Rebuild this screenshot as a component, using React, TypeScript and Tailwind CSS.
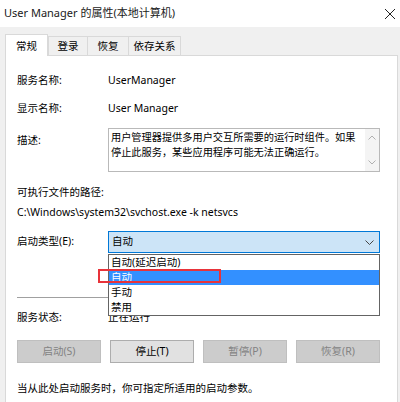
import React from 'react';

// Service properties dialog (Windows style) with open startup-type dropdown

const font = { fontFamily: '"Noto Sans", "Noto Sans CJK SC", sans-serif' };

function Tab({ label, w, active }: { label: string; w: string; active?: boolean }) {
  if (active) {
    return (
      <div className={`relative z-10 -mb-px h-[22px] border border-b-0 border-[#d9d9d9] bg-white pt-[1px] text-center text-[10.5px] leading-[20px] ${w}`}>
        {label}
      </div>
    );
  }
  return (
    <div className={`-ml-px h-[19px] border border-b-0 border-[#d9d9d9] bg-[#f0f0f0] text-center text-[10.5px] leading-[18px] first:ml-0 ${w}`}>
      {label}
    </div>
  );
}

function Btn({ label, disabled }: { label: string; disabled?: boolean }) {
  return (
    <div
      className={
        disabled
          ? 'flex h-[23px] items-center justify-center border border-[#bfbfbf] bg-[#cccccc] text-[10.5px] text-[#838383]'
          : 'flex h-[23px] items-center justify-center border border-[#adadad] bg-[#e1e1e1] text-[10.5px] text-black'
      }
    >
      {label}
    </div>
  );
}

export default function App() {
  return (
    <div className="relative h-[402px] w-[400px] overflow-hidden bg-[#f0f0f0] text-black" style={font}>
      {/* Title bar */}
      <div className="flex h-[27px] items-center justify-between bg-white pl-[4px] pr-[3px]">
        <span className="text-[11px] text-[#1a1a1a]">User Manager 的属性(本地计算机)</span>
        <svg width="12" height="12" viewBox="0 0 12 12" className="mr-[1px]">
          <path d="M1 1 L11 11 M11 1 L1 11" stroke="#222" strokeWidth="1" />
        </svg>
      </div>

      {/* Tabs */}
      <div className="flex items-end pl-[5px] pt-[7px]">
        <Tab label="常规" w="w-[43px]" active />
        <div className="flex items-end">
          <Tab label="登录" w="w-[40px]" />
          <Tab label="恢复" w="w-[42px]" />
          <Tab label="依存关系" w="w-[53px]" />
        </div>
      </div>

      {/* Panel */}
      <div className="ml-[5px] mr-[2px] h-[360px] border border-[#d9d9d9] bg-white pl-[11px] pr-[17px] text-[10.5px]">
        <div className="mt-[15px] flex h-[20px] items-center">
          <span className="w-[91px]">服务名称:</span>
          <span>UserManager</span>
        </div>
        <div className="mt-[8px] flex h-[20px] items-center">
          <span className="w-[91px]">显示名称:</span>
          <span>User Manager</span>
        </div>
        <div className="mt-[9px] flex">
          <span className="w-[91px] pt-[5px]">描述:</span>
          <div className="flex h-[44px] flex-1 border border-[#b9b9b9]">
            <div className="flex-1 pl-[2px] pt-[1px] text-[10.2px] leading-[15px]">
              用户管理器提供多用户交互所需要的运行时组件。如果停止此服务，某些应用程序可能无法正确运行。
            </div>
            <div className="flex w-[14px] flex-col items-center justify-between bg-[#f4f4f4] py-[6px]">
              <svg width="8" height="5" viewBox="0 0 8 5">
                <path d="M0.5 4.5 L4 1 L7.5 4.5" fill="none" stroke="#b0b0b0" strokeWidth="1" />
              </svg>
              <svg width="8" height="5" viewBox="0 0 8 5">
                <path d="M0.5 0.5 L4 4 L7.5 0.5" fill="none" stroke="#b0b0b0" strokeWidth="1" />
              </svg>
            </div>
          </div>
        </div>
        <div className="mt-[10px] h-[20px] leading-[20px]">可执行文件的路径:</div>
        <div className="h-[20px] leading-[20px]">C:\Windows\system32\svchost.exe -k netsvcs</div>
        <div className="mt-[9px] flex items-center">
          <span className="w-[91px]">启动类型(E):</span>
          <div className="flex h-[22px] flex-1 items-center justify-between border border-[#0078d7] bg-[#cce4f7] pl-[3px] pr-[5px]">
            <span>自动</span>
            <svg width="9" height="5" viewBox="0 0 9 5">
              <path d="M0.5 0.5 L4.5 4.5 L8.5 0.5" fill="none" stroke="#444" strokeWidth="1" />
            </svg>
          </div>
        </div>
        <div className="mt-[44px] h-px bg-[#a0a0a0]" />
        <div className="mt-[10px] flex h-[20px] items-center">
          <span className="w-[91px]">服务状态:</span>
          <span>正在运行</span>
        </div>
        <div className="mt-[12px] grid grid-cols-4 gap-[9px]">
          <Btn label="启动(S)" disabled />
          <Btn label="停止(T)" />
          <Btn label="暂停(P)" disabled />
          <Btn label="恢复(R)" disabled />
        </div>
        <div className="mt-[15px] h-[20px] leading-[20px]">当从此处启动服务时，你可指定所适用的启动参数。</div>
      </div>

      {/* Open dropdown list */}
      <div className="absolute left-[108px] top-[254px] flex w-[272px] flex-col border border-[#646464] bg-white text-[10.5px] leading-[15px]">
        <div className="h-[15px] pl-[2px]">自动(延迟启动)</div>
        <div className="h-[15px] bg-[#3390ff] pl-[2px] text-white">自动</div>
        <div className="h-[15px] pl-[2px]">手动</div>
        <div className="h-[15px] pl-[2px]">禁用</div>
      </div>

      {/* Red highlight marker */}
      <div className="absolute left-[98px] top-[269px] h-[14px] w-[123px] border-2 border-[#e8333a]" />
    </div>
  );
}
